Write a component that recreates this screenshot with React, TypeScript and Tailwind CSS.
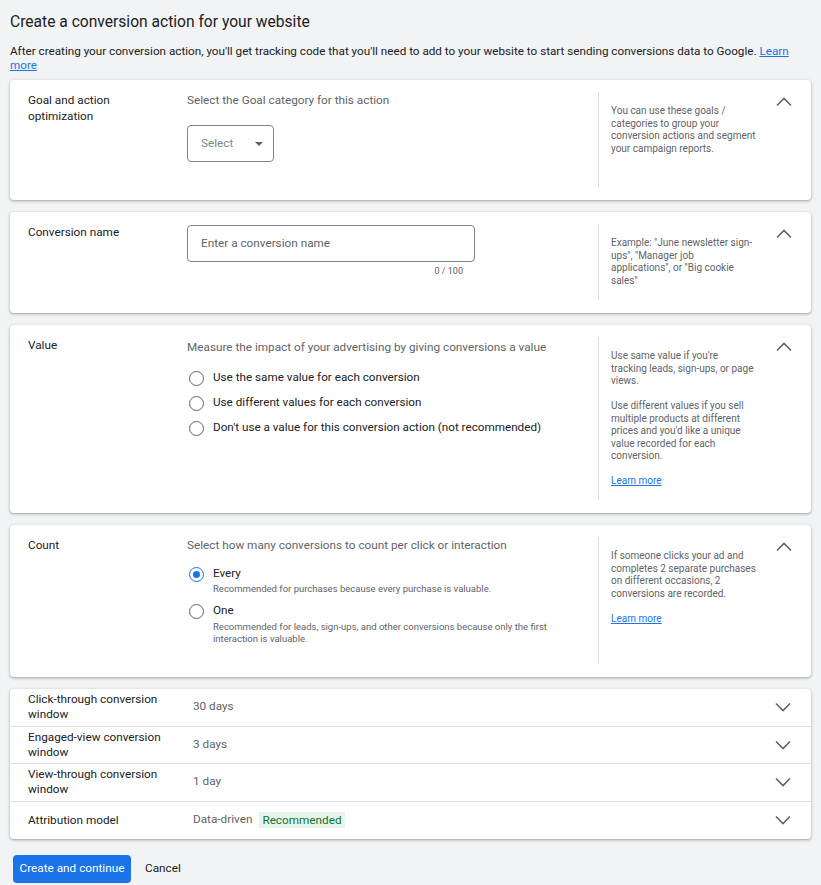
import React from 'react';

function ChevronUp() {
  return (
    <svg width="18" height="10" viewBox="0 0 18 10" fill="none" aria-hidden="true">
      <path d="M2 8.5L9 1.5L16 8.5" stroke="#5f6368" strokeWidth="1.6" />
    </svg>
  );
}

function ChevronDown() {
  return (
    <svg width="18" height="10" viewBox="0 0 18 10" fill="none" aria-hidden="true">
      <path d="M2 1.5L9 8.5L16 1.5" stroke="#5f6368" strokeWidth="1.6" />
    </svg>
  );
}

function Radio({ checked = false }: { checked?: boolean }) {
  return (
    <span
      className={`flex items-center justify-center w-[15px] h-[15px] rounded-full border-[1.6px] shrink-0 ${
        checked ? 'border-[#1a73e8]' : 'border-[#5f6368]'
      }`}
    >
      {checked && <span className="w-[7px] h-[7px] rounded-full bg-[#1a73e8]" />}
    </span>
  );
}

interface SectionProps {
  label: string;
  minH: string;
  children: React.ReactNode;
  help: React.ReactNode;
}

function Section({ label, minH, children, help }: SectionProps) {
  return (
    <section className="bg-white rounded-[4px] shadow-[0_1px_2px_rgba(60,64,67,0.3),0_1px_3px_1px_rgba(60,64,67,0.12)] pt-[12px] pb-[13px] pl-[18px]">
      <div className={`flex ${minH}`}>
        <div className="w-[159px] shrink-0 text-[11.75px] leading-[16px] text-[#202124] pr-4">{label}</div>
        <div className="flex-1">{children}</div>
        <div className="w-[213px] shrink-0 flex border-l border-[#dadce0]">
          <div className="w-[157px] shrink-0 pl-[12px] pt-[13px] text-[10px] leading-[12.5px] text-[#5f6368]">{help}</div>
          <div className="flex-1 flex justify-center pt-[5px]">
            <ChevronUp />
          </div>
        </div>
      </div>
    </section>
  );
}

const LearnMore = () => (
  <a href="#" className="text-[#1a73e8] underline">Learn more</a>
);

const collapsed = [
  { label: 'Click-through conversion window', value: '30 days' },
  { label: 'Engaged-view conversion window', value: '3 days' },
  { label: 'View-through conversion window', value: '1 day' },
  { label: 'Attribution model', value: 'Data-driven', badge: 'Recommended' },
];

export default function App() {
  return (
    <div className="min-h-screen bg-[#f1f3f4] px-[10px] pt-[12px] font-['Roboto','Liberation_Sans',sans-serif] text-[#202124]">
      <h1 className="text-[15.6px] leading-[20px] font-normal">Create a conversion action for your website</h1>
      <p className="mt-[12px] text-[11.7px] leading-[14px] text-[#202124]">
        After creating your conversion action, you'll get tracking code that you'll need to add to your website to start sending conversions data to Google.{' '}
        <a href="#" className="text-[#1a73e8] underline">Learn more</a>
      </p>

      <div className="mt-[8px] flex flex-col gap-[12px]">
        {/* Goal */}
        <Section
          label="Goal and action optimization"
          minH="min-h-[95px]"
          help="You can use these goals / categories to group your conversion actions and segment your campaign reports."
        >
          <div className="text-[11.75px] leading-[16px] text-[#5f6368]">Select the Goal category for this action</div>
          <div className="mt-[17px] w-[87px] h-[37px] border border-[#80868b] rounded-[4px] flex items-center justify-between pl-[13px] pr-[10px]">
            <span className="text-[11.75px] text-[#80868b]">Select</span>
            <span className="w-0 h-0 border-l-[4px] border-r-[4px] border-t-[4px] border-l-transparent border-r-transparent border-t-[#5f6368]" />
          </div>
        </Section>

        {/* Conversion name */}
        <Section
          label="Conversion name"
          minH="min-h-[76px]"
          help={
            <>
              Example: "June newsletter sign-ups", "Manager job
              <br />
              applications", or "Big cookie sales"
            </>
          }
        >
          <div className="w-[288px] mt-[1px]">
            <div className="h-[37px] border border-[#80868b] rounded-[4px] flex items-center pl-[13px]">
              <span className="text-[11.75px] text-[#5f6368]">Enter a conversion name</span>
            </div>
            <div className="mt-[3px] pr-[12px] text-right text-[9px] leading-[12px] text-[#5f6368]">0 / 100</div>
          </div>
        </Section>

        {/* Value */}
        <Section
          label="Value"
          minH="min-h-[163px]"
          help={
            <>
              <p>Use same value if you're tracking leads, sign-ups, or page views.</p>
              <p className="mt-[12.5px]">Use different values if you sell multiple products at different prices and you'd like a unique value recorded for each conversion.</p>
              <p className="mt-[12.5px]"><LearnMore /></p>
            </>
          }
        >
          <div className="text-[11.75px] leading-[16px] text-[#5f6368] mt-[2px]">Measure the impact of your advertising by giving conversions a value</div>
          <div className="mt-[13px] flex flex-col gap-[5px]">
            {[
              'Use the same value for each conversion',
              'Use different values for each conversion',
              "Don't use a value for this conversion action (not recommended)",
            ].map((t) => (
              <label key={t} className="flex items-center h-[20px] pl-[2px] gap-[9px] text-[11.7px] text-[#202124]">
                <Radio />
                {t}
              </label>
            ))}
          </div>
        </Section>

        {/* Count */}
        <Section
          label="Count"
          minH="min-h-[127px]"
          help={
            <>
              <p>If someone clicks your ad and completes 2 separate purchases on different occasions, 2 conversions are recorded.</p>
              <p className="mt-[12.5px]"><LearnMore /></p>
            </>
          }
        >
          <div className="text-[11.75px] leading-[16px] text-[#5f6368]">Select how many conversions to count per click or interaction</div>
          <div className="mt-[11px] pl-[2px]">
            <div className="flex items-center h-[20px] gap-[9px] text-[11.7px]">
              <Radio checked />
              Every
            </div>
            <div className="pl-[24px] -mt-[1px] text-[9.5px] leading-[12px] text-[#5f6368]">
              Recommended for purchases because every purchase is valuable.
            </div>
            <div className="mt-[6px] flex items-center h-[20px] gap-[9px] text-[11.7px]">
              <Radio />
              One
            </div>
            <div className="pl-[24px] text-[9.5px] leading-[12px] text-[#5f6368] max-w-[380px]">
              Recommended for leads, sign-ups, and other conversions because only the first interaction is valuable.
            </div>
          </div>
        </Section>

        {/* Collapsed settings */}
        <div className="bg-white rounded-[4px] shadow-[0_1px_2px_rgba(60,64,67,0.3),0_1px_3px_1px_rgba(60,64,67,0.12)] divide-y divide-[#e0e0e0]">
          {collapsed.map((row) => (
            <div key={row.label} className="h-[37.5px] flex items-center pl-[18px]">
              <div className="w-[150px] mr-[15px] text-[11.75px] leading-[15px] text-[#202124]">{row.label}</div>
              <div className="flex-1 flex items-center gap-[7px] text-[11.75px] text-[#5f6368]">
                {row.value}
                {row.badge && (
                  <span className="bg-[#e6f4ea] text-[#137333] px-[3px] leading-[16px]">{row.badge}</span>
                )}
              </div>
              <div className="w-[56px] flex justify-center">
                <ChevronDown />
              </div>
            </div>
          ))}
        </div>
      </div>

      <div className="mt-[16px] flex items-center gap-[14px] pl-[3px]">
        <button className="h-[28px] w-[118px] bg-[#1a73e8] text-white text-[11.75px] rounded-[4px]">Create and continue</button>
        <button className="text-[11.75px] text-[#202124]">Cancel</button>
      </div>
    </div>
  );
}
